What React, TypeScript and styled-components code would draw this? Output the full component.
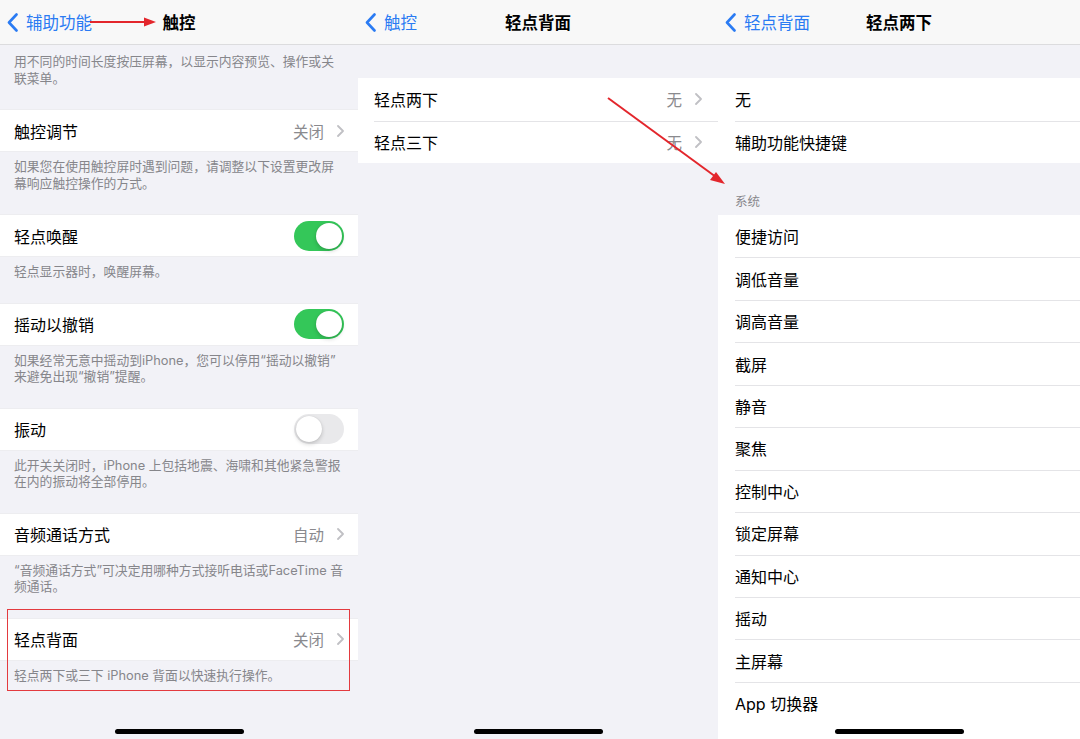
import styled, { createGlobalStyle } from 'styled-components';

const GlobalStyle = createGlobalStyle`
  html, body {
    margin: 0;
    padding: 0;
    background: #f2f2f7;
  }
  body {
    font-family: Inter, "Noto Sans CJK SC", sans-serif;
    -webkit-font-smoothing: antialiased;
  }
`;

const Screen = styled.div`
  position: relative;
  display: flex;
  width: 1080px;
  height: 739px;
  overflow: hidden;
  background: #f2f2f7;
`;

const Panel = styled.div<{ $width: number }>`
  position: relative;
  display: flex;
  flex-direction: column;
  width: ${({ $width }) => $width}px;
  flex-shrink: 0;
  height: 100%;
  overflow: hidden;
  background: #f2f2f7;
`;

const NavBar = styled.div`
  display: grid;
  grid-template-columns: 1fr auto 1fr;
  align-items: center;
  height: 44px;
  padding: 0 7px;
  background: #f8f8f8;
  border-bottom: 1px solid #dcdcde;
  flex-shrink: 0;
`;

const BackButton = styled.div`
  display: flex;
  align-items: center;
  gap: 8px;
  color: #2a7bf3;
  font-size: 16.5px;
  white-space: nowrap;
`;

const Title = styled.div`
  font-size: 16.5px;
  font-weight: 600;
  color: #000;
`;

const Spacer = styled.div<{ $height: number }>`
  height: ${({ $height }) => $height}px;
  flex-shrink: 0;
`;

const Group = styled.div<{ $bordered?: boolean; $fill?: boolean }>`
  background: #fff;
  border-top: ${({ $bordered }) => ($bordered ? '1px solid #ededf0' : 'none')};
  border-bottom: ${({ $bordered }) => ($bordered ? '1px solid #ededf0' : 'none')};
  flex-shrink: 0;
  flex-grow: ${({ $fill }) => ($fill ? 1 : 0)};
`;

const Row = styled.div<{ $inset: number; $height: number }>`
  position: relative;
  display: flex;
  align-items: center;
  height: ${({ $height }) => $height}px;
  padding: 0 ${({ $inset }) => $inset}px;
  font-size: 16px;
  color: #000;

  & + &::before {
    content: '';
    position: absolute;
    top: 0;
    left: ${({ $inset }) => $inset}px;
    right: 0;
    height: 1px;
    background: #e4e4e7;
  }
`;

const RowLabel = styled.span`
  flex: 1;
  white-space: nowrap;
`;

const RowValue = styled.span`
  color: #8a8a8e;
  font-size: 15.5px;
  margin-right: 13px;
`;

const Footer = styled.div<{ $top?: number }>`
  padding: ${({ $top }) => $top ?? 7}px 14px 22px;
  font-size: 12.8px;
  line-height: 16.5px;
  color: #86868b;
  white-space: pre;
  flex-shrink: 0;
`;

const SectionHeader = styled.div`
  height: 52px;
  display: flex;
  align-items: flex-end;
  padding: 0 17px 5px;
  box-sizing: border-box;
  font-size: 12.5px;
  color: #86868b;
  flex-shrink: 0;
`;

const SwitchTrack = styled.div<{ $on: boolean }>`
  position: relative;
  width: 50px;
  height: 30px;
  border-radius: 15px;
  background: ${({ $on }) => ($on ? '#34c759' : '#e9e9eb')};
  flex-shrink: 0;
`;

const SwitchKnob = styled.div<{ $on: boolean }>`
  position: absolute;
  top: 2px;
  left: ${({ $on }) => ($on ? '22px' : '2px')};
  width: 26px;
  height: 26px;
  border-radius: 50%;
  background: #fff;
  box-shadow: 0 2px 4px rgba(0, 0, 0, 0.18), 0 0 1px rgba(0, 0, 0, 0.15);
`;

const HomeIndicator = styled.div`
  position: absolute;
  left: 50%;
  bottom: 5px;
  width: 129px;
  height: 5px;
  margin-left: -64px;
  border-radius: 3px;
  background: #000;
`;

const Highlight = styled.div`
  position: absolute;
  left: 7px;
  top: 609px;
  width: 343px;
  height: 82px;
  border: 1.5px solid #e33a3f;
  box-sizing: border-box;
  pointer-events: none;
`;

const Annotations = styled.svg`
  position: absolute;
  left: 0;
  top: 0;
  pointer-events: none;
`;

const BackChevron = () => (
  <svg width="11" height="19" viewBox="0 0 11 19">
    <path d="M9.5 1.5 L2 9.5 L9.5 17.5" fill="none" stroke="#2a7bf3" strokeWidth="2.6" strokeLinecap="round" strokeLinejoin="round" />
  </svg>
);

const RowChevron = () => (
  <svg width="7" height="12" viewBox="0 0 7 12">
    <path d="M1 1 L6 6 L1 11" fill="none" stroke="#c0c0c4" strokeWidth="1.8" strokeLinecap="round" strokeLinejoin="round" />
  </svg>
);

const Toggle = ({ on }: { on: boolean }) => (
  <SwitchTrack $on={on}>
    <SwitchKnob $on={on} />
  </SwitchTrack>
);

type NavProps = { back: string; title: string };

const Nav = ({ back, title }: NavProps) => (
  <NavBar>
    <BackButton>
      <BackChevron />
      {back}
    </BackButton>
    <Title>{title}</Title>
    <div />
  </NavBar>
);

type TouchRow = {
  label: string;
  value?: string;
  toggle?: boolean;
  note: string;
};

const touchRows: TouchRow[] = [
  { label: '触控调节', value: '关闭', note: '如果您在使用触控屏时遇到问题，请调整以下设置更改屏\n幕响应触控操作的方式。' },
  { label: '轻点唤醒', toggle: true, note: '轻点显示器时，唤醒屏幕。' },
  { label: '摇动以撤销', toggle: true, note: '如果经常无意中摇动到iPhone，您可以停用“摇动以撤销”\n来避免出现“撤销”提醒。' },
  { label: '振动', toggle: false, note: '此开关关闭时，iPhone 上包括地震、海啸和其他紧急警报\n在内的振动将全部停用。' },
  { label: '音频通话方式', value: '自动', note: '“音频通话方式”可决定用哪种方式接听电话或FaceTime 音\n频通话。' },
  { label: '轻点背面', value: '关闭', note: '轻点两下或三下 iPhone 背面以快速执行操作。' },
];

const systemActions = [
  '便捷访问',
  '调低音量',
  '调高音量',
  '截屏',
  '静音',
  '聚焦',
  '控制中心',
  '锁定屏幕',
  '通知中心',
  '摇动',
  '主屏幕',
  'App 切换器',
];

export default function App() {
  return (
    <>
      <GlobalStyle />
      <Screen>
        <Panel $width={358}>
          <Nav back="辅助功能" title="触控" />
          <Footer $top={9}>{'用不同的时间长度按压屏幕，以显示内容预览、操作或关\n联菜单。'}</Footer>
          {touchRows.map((row) => (
            <div key={row.label}>
              <Group $bordered>
                <Row $inset={14} $height={41}>
                  <RowLabel>{row.label}</RowLabel>
                  {row.value && <RowValue>{row.value}</RowValue>}
                  {row.value && <RowChevron />}
                  {row.toggle !== undefined && <Toggle on={row.toggle} />}
                </Row>
              </Group>
              <Footer>{row.note}</Footer>
            </div>
          ))}
          <Highlight />
          <HomeIndicator />
        </Panel>

        <Panel $width={360}>
          <Nav back="触控" title="轻点背面" />
          <Spacer $height={33} />
          <Group>
            <Row $inset={16} $height={42.5}>
              <RowLabel>轻点两下</RowLabel>
              <RowValue>无</RowValue>
              <RowChevron />
            </Row>
            <Row $inset={16} $height={42.5}>
              <RowLabel>轻点三下</RowLabel>
              <RowValue>无</RowValue>
              <RowChevron />
            </Row>
          </Group>
          <HomeIndicator />
        </Panel>

        <Panel $width={362}>
          <Nav back="轻点背面" title="轻点两下" />
          <Spacer $height={33} />
          <Group>
            <Row $inset={17} $height={42.5}>
              <RowLabel>无</RowLabel>
            </Row>
            <Row $inset={17} $height={42.5}>
              <RowLabel>辅助功能快捷键</RowLabel>
            </Row>
          </Group>
          <SectionHeader>系统</SectionHeader>
          <Group $fill>
            {systemActions.map((label) => (
              <Row key={label} $inset={17} $height={42.45}>
                <RowLabel>{label}</RowLabel>
              </Row>
            ))}
            <Row $inset={17} $height={20} />
          </Group>
          <HomeIndicator />
        </Panel>

        <Annotations width="1080" height="739" viewBox="0 0 1080 739">
          <line x1="90" y1="22" x2="146" y2="22" stroke="#e3262c" strokeWidth="2" />
          <polygon points="156,22 144,17.5 144,26.5" fill="#e3262c" />
          <line x1="608" y1="98" x2="716" y2="177" stroke="#e3262c" strokeWidth="2" />
          <polygon points="725,184 710,180 716,172" fill="#e3262c" />
        </Annotations>
      </Screen>
    </>
  );
}
